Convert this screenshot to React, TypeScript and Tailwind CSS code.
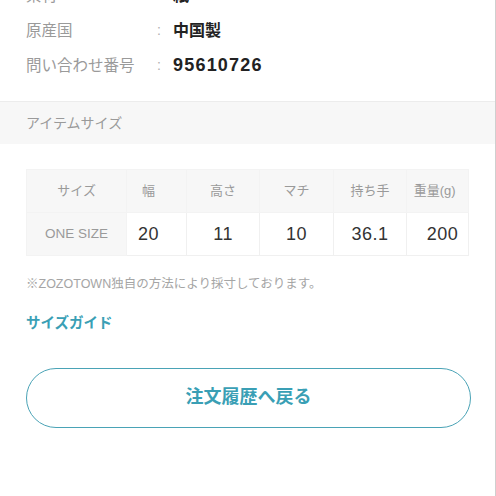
import React from "react";

const specs = [
  { label: "素材", value: "紙", size: "text-[16px]" },
  { label: "原産国", value: "中国製", size: "text-[16px]" },
  { label: "問い合わせ番号", value: "95610726", size: "text-[18px] tracking-[1.2px]" },
];

const cols = [
  { head: "サイズ", w: "w-[101px]" },
  { head: "幅", w: "w-[60px] pr-[16px]" },
  { head: "高さ", w: "w-[74px]" },
  { head: "マチ", w: "w-[74px]" },
  { head: "持ち手", w: "w-[74px]" },
  { head: "重量(g)", w: "w-[62px] pr-[6px]" },
];

const values = [
  { v: "20", pad: "pr-[16px]" },
  { v: "11", pad: "" },
  { v: "10", pad: "" },
  { v: "36.1", pad: "" },
  { v: "200", pad: "pl-[10px]" },
];

export default function App() {
  return (
    <div
      className="w-[496px] h-[496px] overflow-hidden bg-white border-r border-[#cfcfcf]"
      style={{ fontFamily: '"Liberation Sans", "Noto Sans CJK JP", sans-serif' }}
    >
      {/* spec rows */}
      <div className="-mt-[22px] pb-[18px] border-b border-[#ececec]">
        {specs.map((s) => (
          <div key={s.label} className="flex items-center h-[35px] pl-[26px]">
            <span className="w-[131px] text-[15.5px] text-[#9a9a9a]">{s.label}</span>
            <span className="w-[16px] text-[14px] text-[#b0b0b0]">:</span>
            <span className={`${s.size} font-semibold text-[#222]`}>{s.value}</span>
          </div>
        ))}
      </div>

      {/* section header */}
      <div className="h-[42px] flex items-center pl-[26px] bg-[#f7f7f7] text-[14px] text-[#9a9a9a]">
        アイテムサイズ
      </div>

      {/* size table */}
      <div className="px-[26px] pt-[25px]">
        <table className="border-collapse bg-[#f7f7f7]">
          <tbody>
            <tr className="h-[43px]">
              {cols.map((c) => (
                <th
                  key={c.head}
                  className={`${c.w} font-normal text-[13px] text-[#9a9a9a] border border-[#f3f3f3]`}
                >
                  {c.head}
                </th>
              ))}
            </tr>
            <tr className="h-[43px]">
              <td className="text-center text-[13.5px] text-[#9a9a9a] border border-[#f3f3f3]">
                ONE SIZE
              </td>
              {values.map((c) => (
                <td
                  key={c.v}
                  className={`${c.pad} text-center text-[18px] tracking-[0.5px] text-[#333] bg-white border border-[#f0f0f0]`}
                >
                  {c.v}
                </td>
              ))}
            </tr>
          </tbody>
        </table>

        <p className="mt-[19px] text-[12.5px] text-[#a5a5a5]">
          ※ZOZOTOWN独自の方法により採寸しております。
        </p>

        <p className="mt-[19px] text-[14.5px] font-bold text-[#3a9fb5]">サイズガイド</p>

        <button className="mt-[33px] w-[445px] h-[60px] rounded-full border-[1.5px] border-[#4aa3b6] text-[18px] font-bold text-[#3a9fb5] bg-white">
          注文履歴へ戻る
        </button>
      </div>
    </div>
  );
}
